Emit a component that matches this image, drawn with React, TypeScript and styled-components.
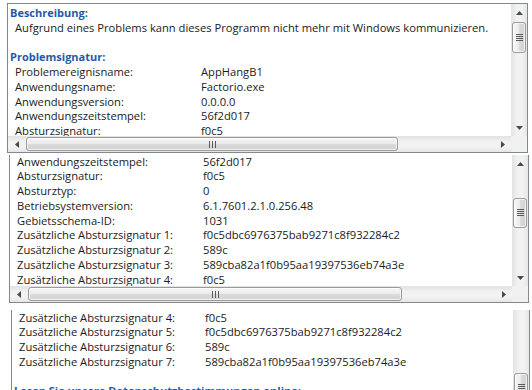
import React from 'react'
import styled, { createGlobalStyle } from 'styled-components'

const GlobalStyle = createGlobalStyle`
  * { box-sizing: border-box; }
  html, body { margin: 0; padding: 0; background: #fff; }
  body { font-family: "Open Sans", "Liberation Sans", sans-serif; }
`

const LINE = 14.75

type Line =
  | { kind: 'head'; text: string }
  | { kind: 'para'; text: string }
  | { kind: 'row'; label: string; value: string }
  | { kind: 'blank' }

const lines: Line[] = [
  { kind: 'head', text: 'Beschreibung:' },
  { kind: 'para', text: 'Aufgrund eines Problems kann dieses Programm nicht mehr mit Windows kommunizieren.' },
  { kind: 'blank' },
  { kind: 'head', text: 'Problemsignatur:' },
  { kind: 'row', label: 'Problemereignisname:', value: 'AppHangB1' },
  { kind: 'row', label: 'Anwendungsname:', value: 'Factorio.exe' },
  { kind: 'row', label: 'Anwendungsversion:', value: '0.0.0.0' },
  { kind: 'row', label: 'Anwendungszeitstempel:', value: '56f2d017' },
  { kind: 'row', label: 'Absturzsignatur:', value: 'f0c5' },
  { kind: 'row', label: 'Absturztyp:', value: '0' },
  { kind: 'row', label: 'Betriebsystemversion:', value: '6.1.7601.2.1.0.256.48' },
  { kind: 'row', label: 'Gebietsschema-ID:', value: '1031' },
  { kind: 'row', label: 'Zusätzliche Absturzsignatur 1:', value: 'f0c5dbc6976375bab9271c8f932284c2' },
  { kind: 'row', label: 'Zusätzliche Absturzsignatur 2:', value: '589c' },
  { kind: 'row', label: 'Zusätzliche Absturzsignatur 3:', value: '589cba82a1f0b95aa19397536eb74a3e' },
  { kind: 'row', label: 'Zusätzliche Absturzsignatur 4:', value: 'f0c5' },
  { kind: 'row', label: 'Zusätzliche Absturzsignatur 5:', value: 'f0c5dbc6976375bab9271c8f932284c2' },
  { kind: 'row', label: 'Zusätzliche Absturzsignatur 6:', value: '589c' },
  { kind: 'row', label: 'Zusätzliche Absturzsignatur 7:', value: '589cba82a1f0b95aa19397536eb74a3e' },
  { kind: 'blank' },
  { kind: 'head', text: 'Lesen Sie unsere Datenschutzbestimmungen online:' },
]

const Page = styled.div`
  width: 532px;
  height: 390px;
  overflow: hidden;
  display: flex;
  flex-direction: column;
  background: #fff;
`

interface FrameProps {
  $top: number
  $left: number
  $right: number
  $height: number
  $topEdge: boolean
  $hbar: boolean
}

const Frame = styled.div<FrameProps>`
  flex: none;
  margin: ${(p) => p.$top}px ${(p) => p.$right}px 0 ${(p) => p.$left}px;
  height: ${(p) => p.$height}px;
  border: 1px solid #828790;
  border-top-width: ${(p) => (p.$topEdge ? 1 : 0)}px;
  border-bottom-width: ${(p) => (p.$hbar ? 1 : 0)}px;
  display: grid;
  grid-template-columns: 1fr 16px;
  grid-template-rows: ${(p) => (p.$hbar ? '1fr 16px' : '1fr')};
  background: #fff;
  overflow: hidden;
`

const Viewport = styled.div`
  overflow: hidden;
  min-width: 0;
  min-height: 0;
`

const Content = styled.div<{ $shift: number }>`
  margin-top: ${(p) => p.$shift}px;
  padding: 2px 0 0 2px;
  font-size: 11.2px;
  line-height: ${LINE}px;
  color: #1b1b1b;
  white-space: nowrap;
`

const Heading = styled.div`
  height: ${LINE}px;
  font-size: 11px;
  font-weight: 700;
  color: #1f5aa6;
`

const Para = styled.div`
  height: ${LINE}px;
  padding-left: 5px;
`

const Row = styled.div`
  height: ${LINE}px;
  padding-left: 5px;
  display: grid;
  grid-template-columns: 186px auto;
`

const VBar = styled.div`
  display: flex;
  flex-direction: column;
  align-items: stretch;
  background: linear-gradient(to right, #e2e2e2, #f1f1f1 35%, #f3f3f3 65%, #e6e6e6);
  min-height: 0;
  overflow: hidden;
`

const HBar = styled.div`
  display: flex;
  align-items: stretch;
  background: linear-gradient(to bottom, #e2e2e2, #f1f1f1 35%, #f3f3f3 65%, #e6e6e6);
  min-width: 0;
`

const Corner = styled.div`
  background: #f0f0f0;
`

const ArrowBtn = styled.div<{ $vertical: boolean }>`
  flex: none;
  ${(p) => (p.$vertical ? 'height: 17px;' : 'width: 17px;')}
  display: flex;
  align-items: center;
  justify-content: center;
`

const Track = styled.div<{ $vertical: boolean }>`
  flex: 1;
  display: flex;
  flex-direction: ${(p) => (p.$vertical ? 'column' : 'row')};
  ${(p) => (p.$vertical ? 'padding: 0 1px;' : 'padding: 1px 0;')}
  min-width: 0;
  min-height: 0;
`

const Thumb = styled.div<{ $vertical: boolean; $start: number; $size: number }>`
  flex: none;
  ${(p) =>
    p.$vertical
      ? `margin-top: ${p.$start}px; height: ${p.$size}px;`
      : `margin-left: ${p.$start}px; width: ${p.$size}px;`}
  border: 1px solid #9a9a9a;
  border-radius: 3px;
  background: ${(p) =>
    p.$vertical
      ? 'linear-gradient(to right, #f7f7f7, #ececec 45%, #dadada 55%, #d2d2d2)'
      : 'linear-gradient(to bottom, #f7f7f7, #ececec 45%, #dadada 55%, #d2d2d2)'};
  box-shadow: inset 0 0 0 1px rgba(255, 255, 255, 0.7);
  display: flex;
  align-items: center;
  justify-content: center;
`

function Arrow({ dir }: { dir: 'up' | 'down' | 'left' | 'right' }) {
  const pts = {
    up: '0,4 3.5,0 7,4',
    down: '0,0 3.5,4 7,0',
    left: '4,0 0,3.5 4,7',
    right: '0,0 4,3.5 0,7',
  }[dir]
  const vertical = dir === 'up' || dir === 'down'
  return (
    <svg width={vertical ? 7 : 4} height={vertical ? 4 : 7} viewBox={vertical ? '0 0 7 4' : '0 0 4 7'}>
      <polygon points={pts} fill="#4a4a4a" />
    </svg>
  )
}

function Grip({ vertical }: { vertical: boolean }) {
  return vertical ? (
    <svg width="7" height="8" viewBox="0 0 7 8">
      {[0, 2, 4, 6].map((y) => (
        <line key={y} x1="0" x2="7" y1={y + 0.5} y2={y + 0.5} stroke="#5a5a5a" strokeWidth="1" />
      ))}
    </svg>
  ) : (
    <svg width="7" height="7" viewBox="0 0 7 7">
      {[0, 3, 6].map((x) => (
        <line key={x} x1={x + 0.5} x2={x + 0.5} y1="0" y2="7" stroke="#5a5a5a" strokeWidth="1" />
      ))}
    </svg>
  )
}

function VScroll({ start, size, arrows }: { start: number; size: number; arrows: boolean }) {
  return (
    <VBar>
      {arrows && (
        <ArrowBtn $vertical>
          <Arrow dir="up" />
        </ArrowBtn>
      )}
      <Track $vertical>
        <Thumb $vertical $start={start} $size={size}>
          <Grip vertical />
        </Thumb>
      </Track>
      {arrows && (
        <ArrowBtn $vertical>
          <Arrow dir="down" />
        </ArrowBtn>
      )}
    </VBar>
  )
}

function HScroll({ start, size }: { start: number; size: number }) {
  return (
    <HBar>
      <ArrowBtn $vertical={false}>
        <Arrow dir="left" />
      </ArrowBtn>
      <Track $vertical={false}>
        <Thumb $vertical={false} $start={start} $size={size}>
          <Grip vertical={false} />
        </Thumb>
      </Track>
      <ArrowBtn $vertical={false}>
        <Arrow dir="right" />
      </ArrowBtn>
    </HBar>
  )
}

// scroll: pixels the text box is scrolled down; only lines from..to are rendered
function Lines({ scroll, from, to }: { scroll: number; from: number; to: number }) {
  return (
    <Content $shift={from * LINE - scroll}>
      {lines.slice(from, to + 1).map((l, i) => {
        if (l.kind === 'head') return <Heading key={i}>{l.text}</Heading>
        if (l.kind === 'para') return <Para key={i}>{l.text}</Para>
        if (l.kind === 'row')
          return (
            <Row key={i}>
              <span>{l.label}</span>
              <span>{l.value}</span>
            </Row>
          )
        return <Para key={i} />
      })}
    </Content>
  )
}

export default function App() {
  return (
    <Page>
      <GlobalStyle />
      <Frame $top={3} $left={7} $right={4} $height={150} $topEdge $hbar>
        <Viewport>
          <Lines scroll={0} from={0} to={8} />
        </Viewport>
        <VScroll arrows start={1} size={31} />
        <HScroll start={1} size={372} />
        <Corner />
      </Frame>
      <Frame $top={2} $left={9} $right={3} $height={148} $topEdge={false} $hbar>
        <Viewport>
          <Lines scroll={105.6} from={7} to={15} />
        </Viewport>
        <VScroll arrows start={26} size={30} />
        <HScroll start={1} size={374} />
        <Corner />
      </Frame>
      <Frame $top={7} $left={11} $right={2} $height={100} $topEdge={false} $hbar={false}>
        <Viewport>
          <Lines scroll={222.6} from={14} to={20} />
        </Viewport>
        <VScroll arrows={false} start={63} size={30} />
      </Frame>
    </Page>
  )
}
